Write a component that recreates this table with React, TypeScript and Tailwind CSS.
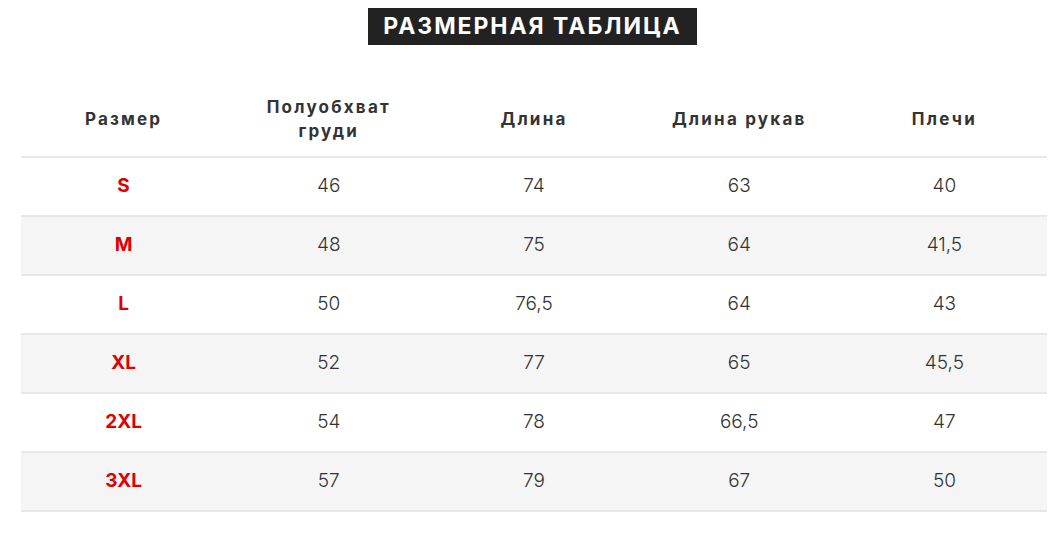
const columns = ["Размер", "Полуобхват груди", "Длина", "Длина рукав", "Плечи"]

const rows = [
  ["S", "46", "74", "63", "40"],
  ["M", "48", "75", "64", "41,5"],
  ["L", "50", "76,5", "64", "43"],
  ["XL", "52", "77", "65", "45,5"],
  ["2XL", "54", "78", "66,5", "47"],
  ["3XL", "57", "79", "67", "50"],
]

export default function App() {
  return (
    <div className="min-h-screen bg-white pt-2 font-['Inter',sans-serif] text-[#333]">
      {/* Title */}
      <div className="flex justify-center pl-[6px]">
        <h2 className="bg-[#222] px-[15px] h-[37px] flex items-center text-[23px] font-bold text-white uppercase tracking-[0.085em]">
          Размерная таблица
        </h2>
      </div>

      {/* Size table */}
      <div className="ml-[21px] mr-[12px] mt-[40px]">
        <div className="grid grid-cols-5 h-[73px] items-center border-b-2 border-[#e8e8e8]">
          {columns.map((c) => (
            <div
              key={c}
              className="mx-auto max-w-[150px] pb-[3px] text-center text-[17px] font-bold tracking-[0.13em] leading-[24px] text-[#333]"
            >
              {c}
            </div>
          ))}
        </div>
        {rows.map((row, i) => (
          <div
            key={row[0]}
            className={
              i % 2 === 1
                ? "grid grid-cols-5 h-[59px] items-center border-b-2 border-[#e8e8e8] bg-[#f5f5f5]"
                : "grid grid-cols-5 h-[59px] items-center border-b-2 border-[#e8e8e8]"
            }
          >
            {row.map((cell, j) => (
              <div
                key={j}
                className={
                  j === 0
                    ? "text-center text-[19px] font-bold text-[#e00000]"
                    : "text-center text-[19px] font-light text-[#333]"
                }
              >
                {cell}
              </div>
            ))}
          </div>
        ))}
      </div>
    </div>
  )
}
